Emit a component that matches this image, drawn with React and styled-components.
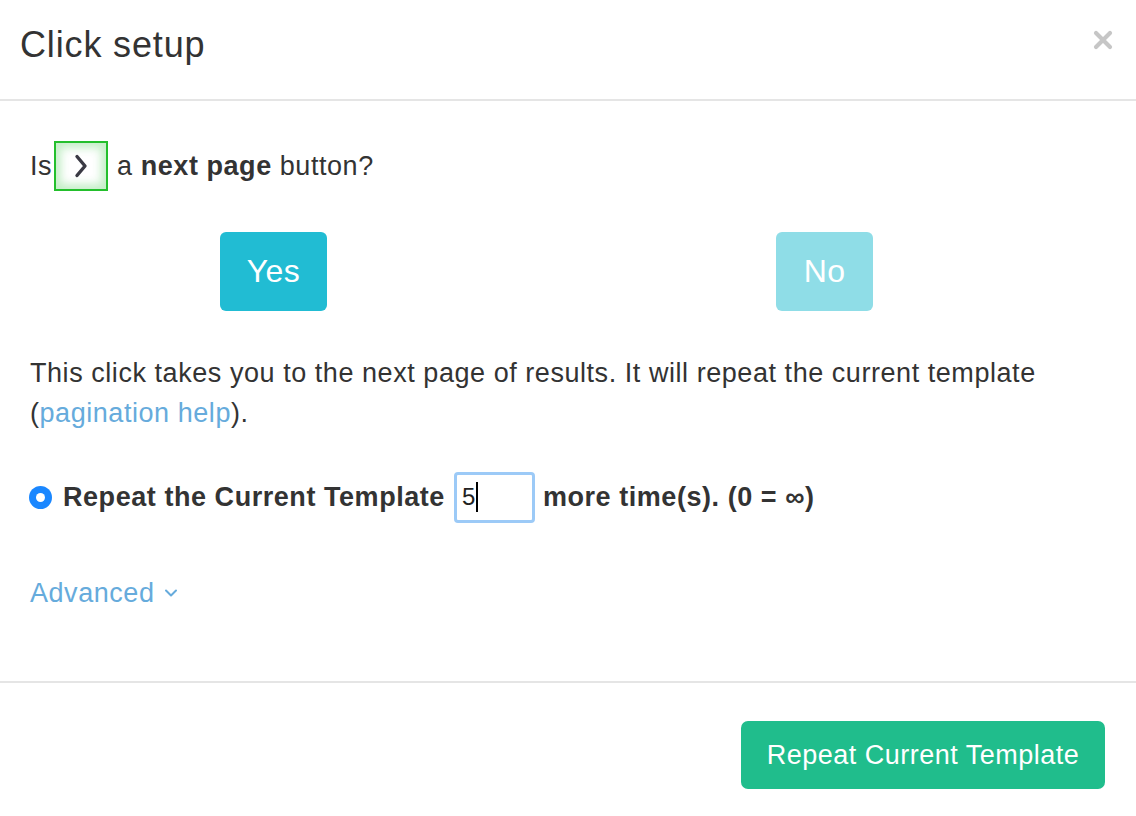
import React from "react";
import styled, { createGlobalStyle } from "styled-components";

const Global = createGlobalStyle`
  html, body { margin: 0; padding: 0; background: #fff; }
  body { font-family: "Liberation Sans", Arial, sans-serif; color: #333; }
  * { box-sizing: border-box; }
`;

const Modal = styled.div`
  width: 1136px;
  height: 816px;
  background: #fff;
  display: flex;
  flex-direction: column;
`;

const Header = styled.div`
  height: 101px;
  border-bottom: 2px solid #e5e5e5;
  display: flex;
  align-items: center;
  justify-content: space-between;
  padding: 0 23px 9px 20px;
`;

const Title = styled.h2`
  margin: 0;
  font-size: 36px;
  font-weight: 400;
  color: #333;
  letter-spacing: 0.85px;
`;

const Close = styled.button`
  border: 0;
  background: none;
  padding: 0;
  width: 20px;
  height: 20px;
  display: flex;
  margin-bottom: 10px;
  cursor: pointer;
`;

const Body = styled.div`
  flex: 1;
  padding: 40px 30px 0 30px;
  border-bottom: 2px solid #e5e5e5;
  font-size: 27px;
  letter-spacing: 0.55px;
`;

const Question = styled.div`
  height: 50px;
  display: flex;
  align-items: center;
  gap: 2px;
`;

const Thumb = styled.span`
  width: 54px;
  height: 50px;
  border: 2px solid #23bf2c;
  background: #fff;
  box-shadow: inset 0 0 9px 5px rgba(60, 200, 70, 0.3);
  display: inline-flex;
  align-items: center;
  justify-content: center;
  margin-right: 7px;
`;

const Strong = styled.b`
  font-weight: 700;
`;

const ChoiceRow = styled.div`
  margin: 41px 6px 0 -32px;
  display: grid;
  grid-template-columns: 1fr 1fr;
  justify-items: center;
`;

const ChoiceButton = styled.button`
  height: 79px;
  padding: 0 ${(p) => p.$pad}px;
  border: 0;
  border-radius: 6px;
  background: ${(p) => p.$bg};
  color: #fff;
  font-family: "Liberation Sans", Arial, sans-serif;
  font-size: 32px;
  letter-spacing: 0.4px;
  cursor: pointer;
`;

const Para = styled.p`
  margin: 42px 0 0 0;
  line-height: 40px;
`;

const Link = styled.a`
  color: #66abdc;
  text-decoration: none;
`;

const RepeatRow = styled.div`
  margin-top: 39px;
  height: 50px;
  display: flex;
  align-items: center;
  font-weight: 700;
`;

const Radio = styled.span`
  width: 23px;
  height: 23px;
  border-radius: 50%;
  background: #1a87ff;
  display: inline-flex;
  align-items: center;
  justify-content: center;
  margin-right: 11px;
  margin-left: -1px;
  &::after {
    content: "";
    width: 9px;
    height: 9px;
    border-radius: 50%;
    background: #fff;
  }
`;

const CountInput = styled.span`
  width: 81px;
  height: 51px;
  border: 3px solid #9ccaf7;
  border-radius: 4px;
  margin: 0 8px 0 9px;
  display: inline-flex;
  align-items: center;
  padding-left: 5px;
  font-weight: 400;
  font-size: 24px;
  letter-spacing: 0;
  color: #222;
`;

const Caret = styled.span`
  width: 2px;
  height: 30px;
  background: #000;
  margin-left: 1px;
`;

const Advanced = styled.div`
  margin-top: 51px;
  line-height: 40px;
  color: #66abdc;
  display: flex;
  align-items: center;
  gap: 9px;
`;

const Footer = styled.div`
  height: 133px;
  display: flex;
  justify-content: flex-end;
  padding: 38px 31px 0 0;
`;

const PrimaryButton = styled.button`
  height: 68px;
  width: 364px;
  border: 0;
  border-radius: 7px;
  background: #20bd8c;
  color: #fff;
  font-family: "Liberation Sans", Arial, sans-serif;
  font-size: 27px;
  letter-spacing: 0.5px;
  cursor: pointer;
`;

export default function App() {
  return (
    <Modal>
      <Global />
      <Header>
        <Title>Click setup</Title>
        <Close aria-label="Close">
          <svg width="20" height="20" viewBox="0 0 20 20">
            <path d="M3 3 L17 17 M17 3 L3 17" stroke="#c6c6c6" strokeWidth="4.2" strokeLinecap="round" />
          </svg>
        </Close>
      </Header>
      <Body>
        <Question>
          <span>Is</span>
          <Thumb>
            <svg width="18" height="26" viewBox="0 0 18 26">
              <path d="M5 3.5 L13 13 L5 22.5" fill="none" stroke="#3a3a44" strokeWidth="3.4" strokeLinecap="round" strokeLinejoin="round" />
            </svg>
          </Thumb>
          <span>
            a <Strong>next page</Strong> button?
          </span>
        </Question>
        <ChoiceRow>
          <ChoiceButton $bg="#21bcd3" $pad={27}>Yes</ChoiceButton>
          <ChoiceButton $bg="#8fdde7" $pad={28}>No</ChoiceButton>
        </ChoiceRow>
        <Para>
          This click takes you to the next page of results. It will repeat the current template
          <br />(<Link href="#">pagination help</Link>).
        </Para>
        <RepeatRow>
          <Radio />
          <span>Repeat the Current Template</span>
          <CountInput>
            5<Caret />
          </CountInput>
          <span>more time(s). (0 = ∞)</span>
        </RepeatRow>
        <Advanced>
          <span>Advanced</span>
          <svg width="14" height="10" viewBox="0 0 14 10">
            <path d="M2 2.5 L7 7.5 L12 2.5" fill="none" stroke="#66abdc" strokeWidth="2" strokeLinecap="round" strokeLinejoin="round" />
          </svg>
        </Advanced>
      </Body>
      <Footer>
        <PrimaryButton>Repeat Current Template</PrimaryButton>
      </Footer>
    </Modal>
  );
}
